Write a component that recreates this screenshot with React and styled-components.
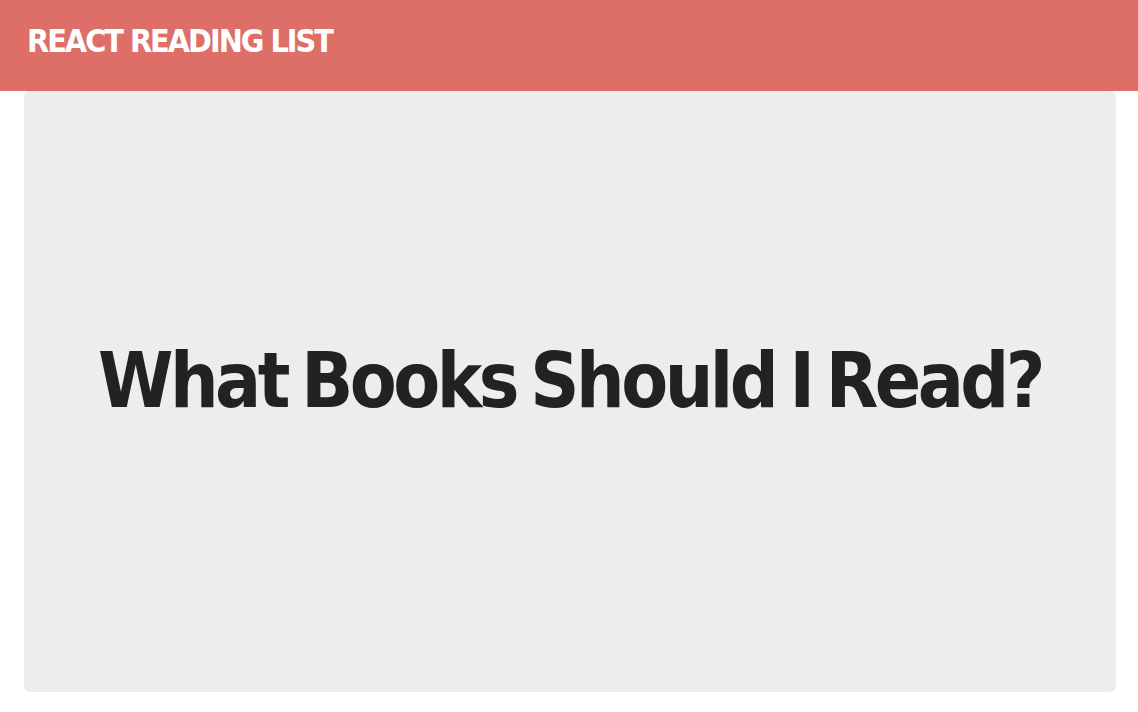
import styled, { createGlobalStyle } from 'styled-components';

const GlobalStyle = createGlobalStyle`
  html, body {
    margin: 0;
    padding: 0;
    background: #fff;
    font-family: "DejaVu Sans", sans-serif;
    font-stretch: condensed;
  }
`;

const Header = styled.header`
  height: 91px;
  background: #dd6f68;
  display: flex;
  align-items: center;
  padding: 0 27px;
  box-sizing: border-box;
`;

const Brand = styled.h1`
  margin: 0 0 9px;
  color: #fff;
  font-size: 32px;
  font-weight: 700;
  font-stretch: condensed;
  letter-spacing: -2px;
  text-transform: uppercase;
  white-space: nowrap;
`;

const Panel = styled.main`
  margin: 0 22px 0 24px;
  height: 601px;
  background: #ededed;
  border-radius: 6px;
  display: flex;
  align-items: center;
  justify-content: center;
`;

const Title = styled.h2`
  margin: 0 0 22px;
  color: #222;
  font-size: 76px;
  font-weight: 700;
  font-stretch: condensed;
  letter-spacing: -3.5px;
  word-spacing: -6px;
  white-space: nowrap;
`;

function App() {
  return (
    <>
      <GlobalStyle />
      <Header>
        <Brand>React Reading List</Brand>
      </Header>
      <Panel>
        <Title>What Books Should I Read?</Title>
      </Panel>
    </>
  );
}

export default App;
